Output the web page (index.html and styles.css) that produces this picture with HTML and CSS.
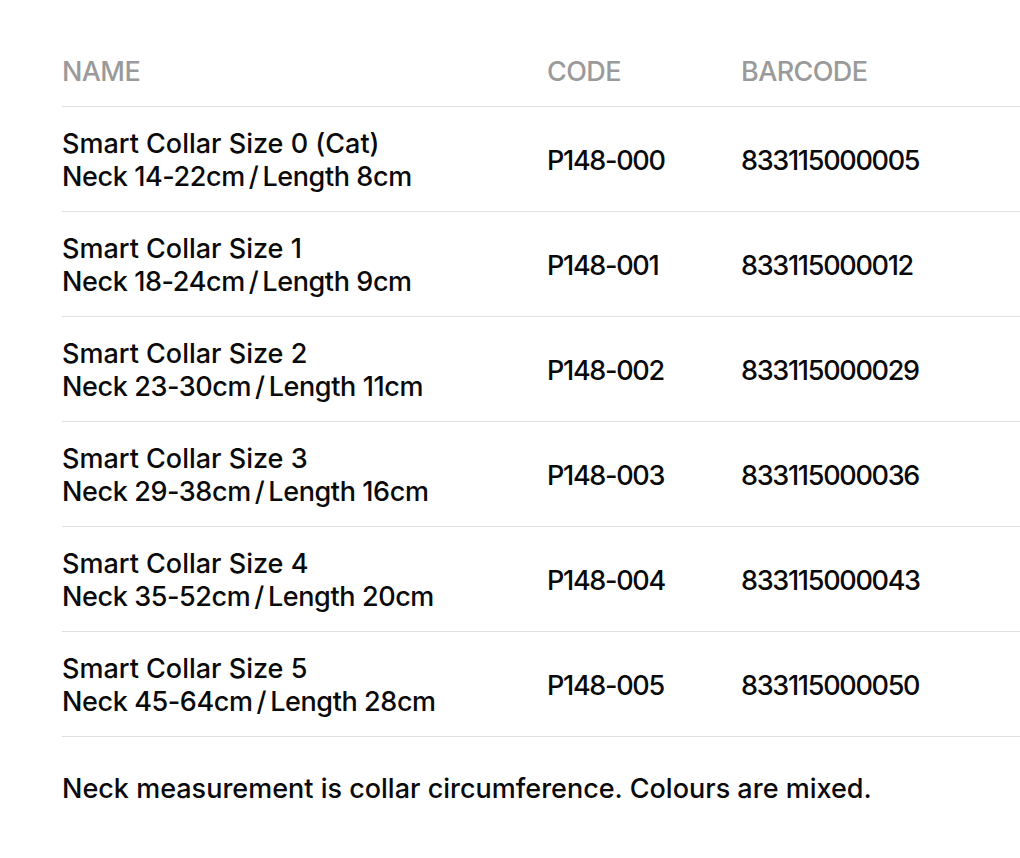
FILE: index.html
```html
<!DOCTYPE html>
<html>
<head>
<meta charset="utf-8">
<link rel="stylesheet" href="styles.css">
</head>
<body>
<div class="page">
  <div class="table">
    <div class="row head">
      <div class="cell name">NAME</div>
      <div class="cell code">CODE</div>
      <div class="cell barcode">BARCODE</div>
    </div>
    <div class="row">
      <div class="cell name">Smart Collar Size 0 (Cat)<br><span class="neck">Neck 14-22cm<span class="sl">/</span>Length 8cm</span></div>
      <div class="cell code">P148-000</div>
      <div class="cell barcode">833115000005</div>
    </div>
    <div class="row">
      <div class="cell name">Smart Collar Size 1<br><span class="neck">Neck 18-24cm<span class="sl">/</span>Length 9cm</span></div>
      <div class="cell code">P148-001</div>
      <div class="cell barcode">833115000012</div>
    </div>
    <div class="row">
      <div class="cell name">Smart Collar Size 2<br><span class="neck">Neck 23-30cm<span class="sl">/</span>Length 11cm</span></div>
      <div class="cell code">P148-002</div>
      <div class="cell barcode">833115000029</div>
    </div>
    <div class="row">
      <div class="cell name">Smart Collar Size 3<br><span class="neck">Neck 29-38cm<span class="sl">/</span>Length 16cm</span></div>
      <div class="cell code">P148-003</div>
      <div class="cell barcode">833115000036</div>
    </div>
    <div class="row">
      <div class="cell name">Smart Collar Size 4<br><span class="neck">Neck 35-52cm<span class="sl">/</span>Length 20cm</span></div>
      <div class="cell code">P148-004</div>
      <div class="cell barcode">833115000043</div>
    </div>
    <div class="row">
      <div class="cell name">Smart Collar Size 5<br><span class="neck">Neck 45-64cm<span class="sl">/</span>Length 28cm</span></div>
      <div class="cell code">P148-005</div>
      <div class="cell barcode">833115000050</div>
    </div>
  </div>
  <p class="note">Neck measurement is collar circumference. Colours are mixed.</p>
</div>
</body>
</html>
```
FILE: styles.css
```css
html, body {
  margin: 0;
  padding: 0;
  background: #fff;
}
.page {
  padding: 37px 0 0 62px;
  font-family: "Inter", "Noto Sans", sans-serif;
  font-weight: 500;
  color: #0a0a0a;
  font-size: 27px;
}
.table {
  display: flex;
  flex-direction: column;
}
.row {
  box-sizing: border-box;
  display: grid;
  grid-template-columns: 485px 194px 1fr;
  align-items: center;
  height: 105px;
  padding-top: 2px;
  border-bottom: 1px solid #e0e0e0;
  line-height: 33px;
}
.row.head {
  height: 70px;
  padding-top: 0;
  color: #9a9a9a;
  letter-spacing: -0.6px;
}
.code, .barcode {
  letter-spacing: -1.3px;
}
.row.head .code, .row.head .barcode {
  letter-spacing: -0.6px;
}
.neck {
  letter-spacing: -0.4px;
}
.sl {
  margin: 0 4px;
}
.note {
  margin: 0;
  padding-top: 35px;
  line-height: 33px;
}
```
